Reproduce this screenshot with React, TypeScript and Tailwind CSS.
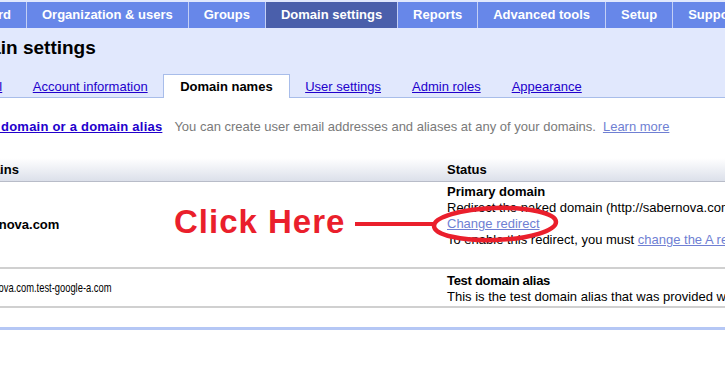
import React from "react";

const navItems = [
  "Organization & users",
  "Groups",
  "Domain settings",
  "Reports",
  "Advanced tools",
  "Setup",
  "Support",
];

const subTabs = ["Account information", "Domain names", "User settings", "Admin roles", "Appearance"];

export default function App() {
  return (
    <div className="relative w-[725px] h-[381px] overflow-hidden bg-white text-[13px] leading-[16px] text-black font-['Liberation_Sans',Arial,sans-serif]">
      {/* lavender header area */}
      <div className="bg-[#e1e8fd] pt-[2px]">
        <div className="flex h-[26px] bg-[#6787e9] text-white font-bold text-[13px] whitespace-nowrap">
          <div className="flex justify-end items-center w-[26px] pr-[15px] overflow-hidden shrink-0">
            <span>Dashboard</span>
          </div>
          {navItems.map((n) => (
            <div
              key={n}
              className={`flex items-center px-[15px] border-l border-[#c3cff5] shrink-0 ${
                n === "Domain settings" ? "bg-[#4a5fab]" : ""
              }`}
            >
              {n}
            </div>
          ))}
        </div>
        <h1 className="ml-[-52px] mt-[8px] text-[19px] leading-[24px] font-bold whitespace-nowrap">Domain settings</h1>
        <div className="flex mt-[14px] ml-[-59px] border-b border-[#a8bdea] whitespace-nowrap">
          <div className="px-[15px] pt-[5px] pb-[2px]">
            <span className="text-[#2200cc] underline">General</span>
          </div>
          {subTabs.map((t) =>
            t === "Domain names" ? (
              <div
                key={t}
                className="px-[16px] pt-[4px] pb-[3px] bg-white border border-[#a8bdea] border-b-0 mb-[-1px] font-bold"
              >
                {t}
              </div>
            ) : (
              <div key={t} className="px-[15.5px] pt-[5px] pb-[2px]">
                <span className="text-[#2200cc] underline">{t}</span>
              </div>
            )
          )}
        </div>
      </div>

      {/* add domain line */}
      <div className="flex ml-[-40px] mt-[21px] whitespace-nowrap">
        <span className="font-bold tracking-[0.22px] text-[#2200cc] underline">Add a domain or a domain alias</span>
        <span className="ml-[12px] text-[#7a7a7a]">You can create user email addresses and aliases at any of your domains.</span>
        <span className="ml-[7px] text-[#6f7fd3] underline">Learn more</span>
      </div>

      {/* table */}
      <div className="mt-[23px] ml-[-36px] w-[800px] whitespace-nowrap">
        <div className="grid grid-cols-[483px_1fr] h-[24px] items-center bg-gradient-to-b from-white to-[#dce0ea] border-b border-[#b8bcc8] font-bold">
          <div>Domains</div>
          <div>Status</div>
        </div>
        <div className="grid grid-cols-[483px_1fr] border-b-2 border-[#d0d0d0] h-[87px]">
          <div className="flex items-center font-bold">sabernova.com</div>
          <div className="pt-[2px]">
            <div className="font-bold">Primary domain</div>
            <div>Redirect the naked domain (http://sabernova.com) to</div>
            <div>
              <span className="text-[#6f7fd3] underline">Change redirect</span>
            </div>
            <div>
              To enable this redirect, you must <span className="text-[#6f7fd3] underline">change the A record</span>
            </div>
          </div>
        </div>
        <div className="grid grid-cols-[483px_1fr] border-b-2 border-[#d0d0d0] h-[39px]">
          <div className="flex items-center pl-[6px]">
            <span className="inline-block origin-left scale-x-[0.72]">sabernova.com.test-google-a.com</span>
          </div>
          <div className="pt-[4px] leading-[16px]">
            <div className="font-bold tracking-[-0.3px]">Test domain alias</div>
            <div>This is the test domain alias that was provided when you signed up</div>
          </div>
        </div>
      </div>

      <div className="mt-[19px] h-[3px] bg-[#b5c7f5]" />

      {/* annotation */}
      <span className="absolute left-[174px] top-[203px] text-[33px] leading-[38px] font-bold tracking-[1px] text-[#ea1f2c] whitespace-nowrap">
        Click Here
      </span>
      <svg className="absolute left-0 top-0 pointer-events-none" width="725" height="381">
        <line x1="355" y1="224" x2="436" y2="224" stroke="#ea1f2c" strokeWidth="4" />
        <ellipse cx="495" cy="224" rx="61" ry="16" fill="none" stroke="#ea1f2c" strokeWidth="4.5" transform="rotate(-2 495 224)" />
      </svg>
    </div>
  );
}
